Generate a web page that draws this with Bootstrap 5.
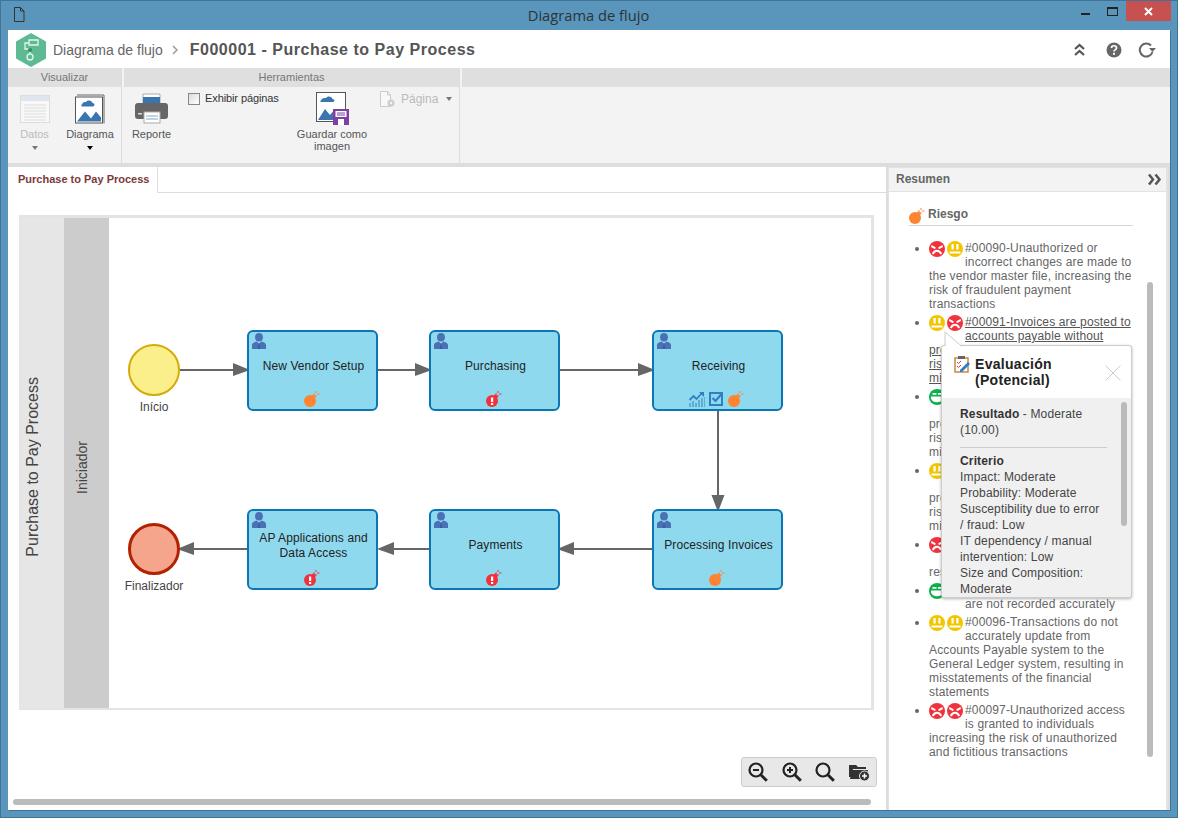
<!DOCTYPE html>
<html lang="es">
<head>
<meta charset="UTF-8">
<title>Diagrama de flujo</title>
<link href="https://cdn.jsdelivr.net/npm/bootstrap@5.3.3/dist/css/bootstrap.min.css" rel="stylesheet">
<style>
html, body { height: 818px; overflow: hidden; }
body { font-family: "Liberation Sans", Arial, sans-serif; font-size: 12px; line-height: 14px; color: #666; background: #5a96bc; }
.win { height: 818px; border: 1px solid #3f7397; padding: 0 7px 7px 7px; }
.titlebar { height: 29px; flex: none; color: #2b3a44; }
.tb-title { font-family: "Open Sans", sans-serif; font-size: 14.7px; line-height: 29px; margin-right: 1px; color: #2d3338; }
.tb-doc { position: absolute; left: 5px; top: 6px; }
.tb-btns { position: absolute; right: -1px; top: 0; }
.tb-close { width: 45px; height: 20px; background: #c75050; }
.tb-mini { width: 27px; height: 20px; }
.inner { flex: 1; min-height: 0; background: #fff; box-shadow: 1px 1px 0 #3f7397; }
.headbar { height: 38px; flex: none; padding: 2px 14px 0 8px; background: #fff; }
.crumb { font-size: 14px; color: #666; margin-left: 7px; }
.crumb-sep { margin: 0 12px 0 9px; }
.page-title { font-size: 16px; font-weight: 700; color: #555; letter-spacing: .52px; }
.head-tools { gap: 16px; }
.ribbon { height: 99px; flex: none; background: #f3f3f3; border-bottom: 4px solid #ddd; }
.rb-group { border-right: 1px solid #ddd; }
.rb-head { height: 19px; line-height: 19px; background: #dfdfdf; text-align: center; font-size: 11px; color: #777; }
.rb-1 { width: 114px; margin-right: 2px; }
.rb-2 { width: 336px; margin-right: 2px; }
.rb-body { height: 76px; padding-top: 6px; }
.rb-btn { text-align: center; font-size: 11px; line-height: 12px; color: #555; flex: none; }
.rb-btn svg { display: block; margin: 0 auto 4px; }
.rb-btn .rb-save { margin-top: -1px; margin-bottom: 3px; }
.is-off { color: #bbb; }
.rb-caret { width: 0; height: 0; border: 3px solid transparent; border-top: 4px solid #777; border-bottom: 0; display: block; margin: 6px auto 0; }
.rb-caret-dark { border-top-color: #000; }
.rb-check { width: 12px; height: 12px; border: 1px solid #888; background: linear-gradient(135deg,#ddd,#fff); display: block; margin-left: 9px; }
.rb-checktxt { font-size: 11px; color: #333; margin: -2px 0 0 5px; letter-spacing: -.1px; }
.pg-icon { margin: -2px 0 0 3px; }
.pg-txt { margin: -1px 0 0 5px; }
.pg-caret { margin: 4px 0 0 8px; }
.mainarea { flex: 1; min-height: 0; background: #ddd; }
.leftpane { width: 878px; flex: none; background: #fff; }
.rightpane { width: 280px; flex: none; margin-left: 2px; background: #fff; border: 2px solid #e2e2e2; border-width: 1px 2px 0 1px; }
.tabbar { height: 26px; flex: none; border-bottom: 1px solid #ddd; }
.tab-item { width: 150px; height: 26px; background: #fff; border-right: 1px solid #ddd; padding-left: 10px; font-size: 11px; line-height: 25px; font-weight: 700; color: #7a3a3a; margin-bottom: -1px; }
.dgm { position: absolute; left: 11px; top: 48px; width: 855px; height: 495px; border: 3px solid #e4e4e4; border-width: 3px 3px 2px 0; }
.pool-lbl { width: 45px; background: #e6e6e6; color: #444; font-size: 16px; padding: 8px 0 0 7px; }
.lane-lbl { width: 45px; background: #ccc; color: #444; font-size: 14px; padding: 8px 0 0 11px; }
.vtext { writing-mode: vertical-rl; transform: rotate(180deg); white-space: nowrap; }
.dgm-lines { position: absolute; left: -19px; top: -218px; }
.dnode { position: absolute; width: 131px; height: 81px; background: #8fd9ef; border: 2px solid #0b76b3; border-radius: 6px; color: #222; font-size: 12px; line-height: 15px; text-align: center; letter-spacing: .1px; }
.dnode-txt { height: 60px; padding: 9px 5px 0 7px; }
.dnode-user { position: absolute; left: 3px; top: 1px; }
.dnode-icons { position: absolute; left: 0; right: 2px; bottom: 2px; gap: 4px; }
.devt { position: absolute; width: 52px; height: 52px; border-radius: 50%; }
.devt-start { background: #fbef8c; border: 2px solid #d4ab0b; }
.devt-end { background: #f4a58c; border: 3px solid #b22200; }
.devt-lbl { position: absolute; width: 90px; text-align: center; color: #444; }
.zoombar { position: absolute; right: 9px; bottom: 23px; width: 136px; height: 30px; background: #e8e8e8; border: 1px solid #ccc; border-radius: 3px; padding: 0 6px; }
.hscroll { position: absolute; left: 5px; bottom: 5px; width: 858px; height: 6px; background: #bbb; border-radius: 3px; }
.res-head { height: 24px; flex: none; background: #f3f3f3; border-bottom: 1px solid #e2e2e2; font-weight: 700; line-height: 21px; padding: 0 4px 0 7px; }
.res-body { flex: 1; min-height: 0; padding: 17px 0 0 20px; }
.risk-head { width: 224px; height: 17px; border-bottom: 1px solid #d5d5d5; font-weight: 700; }
.risk-head svg { margin-top: -1px; }
.risk-head span { margin-left: 3px; margin-top: -2px; }
.risk-list { width: 224px; margin: 15px 0 0 0; padding: 0 0 0 20px; letter-spacing: .15px; }
.risk-list li { margin-bottom: 4px; }
.risk-list li::marker { color: #666; }
.faces { float: left; width: 36px; height: 26px; display: block; }
.faces svg { float: left; margin: 0 2px 0 0; }
.risk-link { color: #555; text-decoration: underline; }
.vscroll { position: absolute; left: 258px; top: 114px; width: 6px; height: 475px; background: #bbb; border-radius: 3px; }
.evalbox { position: absolute; left: 52px; top: 177px; width: 191px; height: 253px; background: #f0f0f0; border: 1px solid #ccc; border-radius: 3px; box-shadow: 0 1px 3px rgba(0,0,0,.3); color: #444; letter-spacing: .15px; }
.evalbox-tip { position: absolute; left: 2px; top: -14px; }
.eval-head { height: 52px; background: #fff; border-radius: 3px 3px 0 0; padding: 10px 11px 0 12px; }
.eval-title { font-size: 14px; line-height: 16px; font-weight: 700; color: #222; letter-spacing: .3px; margin-left: 5px; width: 120px; }
.eval-x { position: absolute; right: 10px; top: 19px; }
.eval-body { padding: 8px 24px 0 18px; line-height: 16px; }
.eval-body hr { margin: 9px 0 5px 0; border-top: 1px solid #ccc; opacity: 1; }
.eval-strong { font-weight: 700; color: #333; }
.eval-scroll { position: absolute; right: 4px; top: 56px; width: 6px; height: 124px; background: #bbb; border-radius: 3px; }
</style>
</head>
<body>
<svg width="0" height="0" class="position-absolute">
  <defs>
    <symbol id="bomb" viewBox="0 0 16 16"><circle cx="6" cy="10" r="6" fill="#ff8431"/><path d="M7.500 5l2-2 2.800 2.800-2 2z" fill="#ff8431"/><path d="M12 0v2M12 4v1.500M9.500 3H11M13 3h2.500" stroke="#ff8431" fill="none"/></symbol>
    <symbol id="bombred" viewBox="0 0 16 16"><circle cx="6" cy="10" r="6" fill="#f0323c"/><path d="M7.500 5l2-2 2.800 2.800-2 2z" fill="#f0323c"/><path d="M12 0v2M12 4v1.500M9.500 3H11M13 3h2.500" stroke="#f0323c" fill="none"/><path d="M5 6.500h2.200v4.500H5zM5 12h2.200v2H5z" fill="#fff"/></symbol>
    <symbol id="user" viewBox="0 0 14 16"><ellipse cx="7" cy="4.300" rx="3.900" ry="4.300" fill="#4a70b5"/><path d="M0 16v-4c0-1.600 1.500-2.700 4.500-3.500L7 10.500l2.500-2c3 .8 4.500 1.900 4.500 3.500v4z" fill="#4a70b5"/><path d="M6.300 16l.4-4.500h.6l.4 4.500z" fill="#2f4f8f"/></symbol>
    <symbol id="fred" viewBox="0 0 16 16"><circle cx="8" cy="8" r="8" fill="#f0323c"/><path d="M2.500 4l4.200 2.200-.6 2L2 6zM13.500 4L9.300 6.200l.6 2L14 6z" fill="#fff"/><path d="M3.800 13c1-2.300 2.600-3.200 4.200-3.200s3.200.9 4.200 3.200" stroke="#fff" stroke-width="1.900" fill="none"/></symbol>
    <symbol id="fyel" viewBox="0 0 16 16"><circle cx="8" cy="8" r="8" fill="#f2c500"/><path d="M4.500 3h2.200v5.500H4.500zM9.300 3h2.200v5.500H9.300zM2.500 10.500h11v1.900h-11z" fill="#fff"/></symbol>
    <symbol id="fgrn" viewBox="0 0 16 16"><circle cx="8" cy="8" r="8" fill="#0cb14b"/><path d="M3.500 4h4v1.800h-4zM9 4h4v1.800H9zM2 7.500h12v2c-1 2.700-3.300 3.800-6 3.800s-5-1.100-6-3.800z" fill="#fff"/></symbol>
    <symbol id="picture" viewBox="0 0 30 30"><path d="M2 1.500h27V30" fill="none" stroke="#666"/><rect x=".5" y="3.500" width="27" height="26" fill="#fff" stroke="#555"/><path d="M7 13h11c2 0 2-3.500-.5-3.500C17 6.500 12 6 11 8.500 8.500 8 7 9.500 7.500 10.500 6 11 6 13 7 13z" fill="#3a75b0"/><path d="M2 28l8-10 6 7 5-7 5 6v4z" fill="#3a75b0"/></symbol>
    <symbol id="mag" viewBox="0 0 20 20"><circle cx="8" cy="8" r="6.500" fill="none" stroke="#222" stroke-width="2.200"/><path d="M12.800 12.800l6 6" stroke="#222" stroke-width="3"/></symbol>
  </defs>
</svg>

<div class="win d-flex flex-column position-relative">
  <div class="titlebar d-flex justify-content-center position-relative">
    <svg class="tb-doc" width="12" height="15" viewBox="0 0 12 15"><path d="M1.500 .5h6l3.500 3.500v10.500H1.500z M7.500 .5V4H11" fill="none" stroke="#333"/></svg>
    <span class="tb-title">Diagrama de flujo</span>
    <div class="tb-btns d-flex">
      <div class="tb-mini d-flex align-items-center justify-content-center"><svg width="9" height="14" viewBox="0 0 9 14"><rect y="9" width="9" height="2" fill="#222"/></svg></div>
      <div class="tb-mini d-flex align-items-center justify-content-center"><svg width="11" height="9" viewBox="0 0 11 9"><rect x=".5" y="1" width="10" height="7.500" fill="none" stroke="#222"/><rect width="11" height="2" fill="#222"/></svg></div>
      <div class="tb-close d-flex align-items-center justify-content-center"><svg width="9" height="9" viewBox="0 0 9 9"><path d="M1 1l7 7M8 1L1 8" stroke="#fff" stroke-width="2"/></svg></div>
    </div>
  </div>

  <div class="inner d-flex flex-column">
    <div class="headbar d-flex align-items-center">
      <svg width="30" height="34" viewBox="0 0 30 34"><path d="M15 0l15 8.500v17L15 34 0 25.500v-17z" fill="#5dba92"/><path d="M13 7h9v5h-9zM11 24a3 3 0 1 0 6 0 3 3 0 1 0-6 0M14 18v3M13 10H9v6h5" fill="none" stroke="#e6f5ee" stroke-width="1.300"/><circle cx="14" cy="17" r="2" fill="#2f8f63"/></svg>
      <span class="crumb">Diagrama de flujo</span>
      <svg class="crumb-sep" width="6" height="10" viewBox="0 0 6 10"><path d="M1 1l4 4-4 4" fill="none" stroke="#999" stroke-width="1.500"/></svg>
      <span class="page-title">F000001 - Purchase to Pay Process</span>
      <div class="ms-auto d-flex align-items-center head-tools">
        <svg width="13" height="14" viewBox="0 0 13 14" class="me-1"><path d="M2 6l4.500-4L11 6M2 12l4.500-4 4.500 4" fill="none" stroke="#555" stroke-width="2.200"/></svg>
        <svg width="16" height="16" viewBox="0 0 16 16"><circle cx="8" cy="8" r="7.500" fill="#666"/><path d="M5.500 6c0-3 5-3 5 0 0 2-2.500 1.800-2.500 3.500" fill="none" stroke="#fff" stroke-width="1.700"/><rect x="7" y="10.800" width="2" height="2" fill="#fff"/></svg>
        <svg width="18" height="16" viewBox="0 0 18 16"><path d="M14.500 10A6.500 6.500 0 1 1 13 3.500" fill="none" stroke="#666" stroke-width="2"/><path d="M11 6h7l-3.500 4z" fill="#666"/></svg>
      </div>
    </div>

    <div class="ribbon d-flex">
      <div class="rb-group rb-1">
        <div class="rb-head">Visualizar</div>
        <div class="rb-body d-flex">
          <div class="rb-btn is-off" style="width:53px">
            <svg width="30" height="31" viewBox="0 0 30 31"><rect x=".5" y="2.500" width="29" height="27" fill="#f8f8f8" stroke="#ddd"/><rect x="1" y="3" width="28" height="5" fill="#dfe6ee"/><path d="M4 12h22M4 15h22M4 18h22M4 21h22M4 24h22M4 27h22" stroke="#ddd"/></svg>
            Datos<span class="rb-caret"></span>
          </div>
          <div class="rb-btn" style="width:58px">
            <svg width="30" height="31"><use href="#picture"/></svg>
            Diagrama<span class="rb-caret rb-caret-dark"></span>
          </div>
        </div>
      </div>
      <div class="rb-group rb-2">
        <div class="rb-head">Herramientas</div>
        <div class="rb-body d-flex">
          <div class="rb-btn" style="width:55px">
            <svg width="33" height="31" viewBox="0 0 33 31"><path d="M8 1h17v9H8z" fill="#fff" stroke="#aaa"/><rect x="8" y="4" width="17" height="6" fill="#3a75b0"/><path d="M3 10h27a3 3 0 0 1 3 3v10a3 3 0 0 1-3 3H3a3 3 0 0 1-3-3V13a3 3 0 0 1 3-3z" fill="#666"/><rect x="9" y="19" width="16" height="11" fill="#fff" stroke="#aaa"/><path d="M11 23h12M11 26h12" stroke="#7fa9d0"/><rect x="3" y="20" width="4" height="1.500" fill="#ddd"/></svg>
            Reporte
          </div>
          <div class="d-flex align-items-start" style="width:108px">
            <span class="rb-check"></span><span class="rb-checktxt">Exhibir páginas</span>
          </div>
          <div class="rb-btn" style="width:90px">
            <svg class="rb-save" width="33" height="33" viewBox="0 0 33 33"><rect x=".5" y=".5" width="29" height="29" fill="#fff" stroke="#555"/><path d="M5 10h12c2 0 2-3-.5-3C16 4 11 3.500 10 6 7 5.500 5 7 5.500 8 4 8.500 4 10 5 10z" fill="#3a75b0"/><path d="M2 28l7-11 5 6 5-6 5 6v5z" fill="#3a75b0"/><rect x="17" y="17" width="16" height="16" fill="#7f3fa5"/><path d="M19.500 19h11v6h-11z" fill="#fff"/><path d="M21 21h8M21 23h8" stroke="#7f3fa5"/><rect x="22" y="27" width="6" height="6" fill="#fff"/></svg>
            Guardar como<br>imagen
          </div>
          <div class="d-flex is-off align-items-start">
            <svg width="16" height="17" viewBox="0 0 16 17" class="pg-icon"><path d="M.5 .5h7l3 3v12H.5z M7.500 .5V4h3" fill="#f8f8f8" stroke="#ccc"/><circle cx="11" cy="12" r="3.500" fill="#ccc"/><circle cx="11" cy="12" r="1.300" fill="#f3f3f3"/></svg>
            <span class="pg-txt">Página</span>
            <span class="rb-caret pg-caret"></span>
          </div>
        </div>
      </div>
      <div class="flex-grow-1">
        <div class="rb-head"></div>
      </div>
    </div>

    <div class="mainarea d-flex">
      <div class="leftpane position-relative d-flex flex-column">
        <div class="tabbar d-flex"><div class="tab-item">Purchase to Pay Process</div></div>
        <div class="dgm d-flex">
          <div class="pool-lbl d-flex align-items-center"><span class="vtext">Purchase to Pay Process</span></div>
          <div class="lane-lbl d-flex align-items-center"><span class="vtext">Iniciador</span></div>
          <svg class="dgm-lines" width="900" height="720" viewBox="0 0 900 720">
            <g stroke="#666" stroke-width="2" fill="none"><path d="M179 370h60M378 370h45M560 370h85M718 410v90M653 549h-88M430 549h-45M248 549h-62"/></g>
            <g fill="#666"><path d="M250 370l-17-7v13zM432 370l-17-7v13zM655 370l-17-7v13zM718 512l-6.500-17h13zM557 549l17-7v13zM377 549l17-7v13zM177 549l17-7v13z"/></g>
          </svg>

          <div class="devt devt-start" style="left:109px;top:126px"></div>
          <div class="devt-lbl" style="left:90px;top:182px">Início</div>
          <div class="devt devt-end" style="left:109px;top:305px"></div>
          <div class="devt-lbl" style="left:90px;top:361px">Finalizador</div>

          <div class="dnode" style="left:228px;top:112px"><svg class="dnode-user" width="14" height="16"><use href="#user"/></svg><div class="dnode-txt d-flex align-items-center justify-content-center">New Vendor Setup</div><div class="dnode-icons d-flex justify-content-center"><svg width="16" height="16"><use href="#bomb"/></svg></div></div>
          <div class="dnode" style="left:410px;top:112px"><svg class="dnode-user" width="14" height="16"><use href="#user"/></svg><div class="dnode-txt d-flex align-items-center justify-content-center">Purchasing</div><div class="dnode-icons d-flex justify-content-center"><svg width="16" height="16"><use href="#bombred"/></svg></div></div>
          <div class="dnode" style="left:633px;top:112px"><svg class="dnode-user" width="14" height="16"><use href="#user"/></svg><div class="dnode-txt d-flex align-items-center justify-content-center">Receiving</div><div class="dnode-icons d-flex justify-content-center">
            <svg width="16" height="16" viewBox="0 0 16 16"><path d="M1 16v-4M4 16v-6M7 16v-4M10 16V9M13 16V7M16 16V6" stroke="#2f7fc4"/><path d="M.5 9l4-4 3 3 5.500-6" fill="none" stroke="#2f7fc4" stroke-width="1.800"/><path d="M10 1h5v5z" fill="#2f7fc4"/></svg>
            <svg width="15" height="15" viewBox="0 0 15 15"><rect x="1" y="2" width="12" height="12" fill="none" stroke="#2f7fc4" stroke-width="2"/><path d="M3.500 7l3 3 6-7" fill="none" stroke="#2f7fc4" stroke-width="2.200"/></svg>
            <svg width="16" height="16"><use href="#bomb"/></svg></div></div>

          <div class="dnode" style="left:228px;top:291px"><svg class="dnode-user" width="14" height="16"><use href="#user"/></svg><div class="dnode-txt d-flex align-items-center justify-content-center">AP Applications and<br>Data Access</div><div class="dnode-icons d-flex justify-content-center"><svg width="16" height="16"><use href="#bombred"/></svg></div></div>
          <div class="dnode" style="left:410px;top:291px"><svg class="dnode-user" width="14" height="16"><use href="#user"/></svg><div class="dnode-txt d-flex align-items-center justify-content-center">Payments</div><div class="dnode-icons d-flex justify-content-center"><svg width="16" height="16"><use href="#bombred"/></svg></div></div>
          <div class="dnode" style="left:633px;top:291px"><svg class="dnode-user" width="14" height="16"><use href="#user"/></svg><div class="dnode-txt d-flex align-items-center justify-content-center">Processing Invoices</div><div class="dnode-icons d-flex justify-content-center"><svg width="16" height="16"><use href="#bomb"/></svg></div></div>
        </div>
        <div class="zoombar d-flex align-items-center justify-content-between">
          <svg width="20" height="20" viewBox="0 0 20 20"><use href="#mag"/><path d="M5 8h6" stroke="#222" stroke-width="2"/></svg>
          <svg width="20" height="20" viewBox="0 0 20 20"><use href="#mag"/><path d="M5 8h6M8 5v6" stroke="#222" stroke-width="2"/></svg>
          <svg width="20" height="20" viewBox="0 0 20 20"><use href="#mag"/></svg>
          <svg width="21" height="18" viewBox="0 0 21 18"><path d="M0 2h7l2 2h8v2H4L2 14H0z M3 7h16l-2 9H1z" fill="#333"/><circle cx="15.500" cy="13" r="5" fill="#333" stroke="#e8e8e8"/><path d="M13 13h5M15.500 10.500v5" stroke="#fff" stroke-width="1.500"/></svg>
        </div>
        <div class="hscroll"></div>
      </div>

      <div class="rightpane position-relative d-flex flex-column">
        <div class="res-head d-flex justify-content-between align-items-center">
          <span>Resumen</span>
          <svg width="14" height="11" viewBox="0 0 14 11"><path d="M1 .5l4 5-4 5M7.500 .5l4 5-4 5" fill="none" stroke="#555" stroke-width="2.500"/></svg>
        </div>
        <div class="res-body">
          <div class="risk-head d-flex"><svg width="16" height="16"><use href="#bomb"/></svg><span>Riesgo</span></div>
          <ul class="risk-list">
            <li><span class="faces"><svg width="16" height="16"><use href="#fred"/></svg><svg width="16" height="16"><use href="#fyel"/></svg></span>#00090-Unauthorized or incorrect changes are made to the vendor master file, increasing the risk of fraudulent payment transactions</li>
            <li><span class="faces"><svg width="16" height="16"><use href="#fyel"/></svg><svg width="16" height="16"><use href="#fred"/></svg></span><span class="risk-link">#00091-Invoices are posted to accounts payable without proper authorization, increasing the risk of payment errors and financial misstatements</span></li>
            <li><span class="faces"><svg width="16" height="16"><use href="#fgrn"/></svg></span>#00092-Invoices are paid<br>to the same vendor twice<br>proper authorization, increasing the<br>risk of payment errors and financial<br>misstatements</li>
            <li><span class="faces"><svg width="16" height="16"><use href="#fyel"/></svg></span>#00093-Payments are issued<br>to inactive vendors without<br>proper authorization, increasing the<br>risk of payment errors and financial<br>misstatements</li>
            <li><span class="faces"><svg width="16" height="16"><use href="#fred"/></svg></span>#00094-Goods received are<br>not matched to purchase<br>resulting in misstatements</li>
            <li><span class="faces"><svg width="16" height="16"><use href="#fgrn"/></svg></span>#00095-Payment amounts<br>are not recorded accurately</li>
            <li><span class="faces"><svg width="16" height="16"><use href="#fyel"/></svg><svg width="16" height="16"><use href="#fyel"/></svg></span>#00096-Transactions do not<br>accurately update from Accounts Payable system to the General Ledger system, resulting in misstatements of the financial statements</li>
            <li><span class="faces"><svg width="16" height="16"><use href="#fred"/></svg><svg width="16" height="16"><use href="#fred"/></svg></span>#00097-Unauthorized access<br>is granted to individuals<br>increasing the risk of unauthorized and fictitious transactions</li>
          </ul>
        </div>
        <div class="vscroll"></div>
        <div class="evalbox">
          <svg class="evalbox-tip" width="18" height="15" viewBox="0 0 18 15"><path d="M1 0l17 14.500H1z" fill="#fff"/><path d="M1 14V0l17 14.500" fill="none" stroke="#ccc"/></svg>
          <div class="eval-head d-flex">
            <svg width="16" height="17" viewBox="0 0 16 17"><rect x="1" y="2" width="13" height="14" fill="#fff" stroke="#c98a3c" stroke-width="1.500"/><rect x="4" y="0" width="7" height="3" fill="#666"/><path d="M3 6l1.500 1.500L7 5M3 10l1.500 1.500L7 9" fill="none" stroke="#e0323c"/><path d="M6 14l8-8 2 2-8 8H6z" fill="#2f7fc4"/></svg>
            <div class="eval-title">Evaluación (Potencial)</div>
            <svg class="eval-x" width="16" height="16" viewBox="0 0 16 16"><path d="M.5 .5l15 15M15.500 .5l-15 15" stroke="#ccc"/></svg>
          </div>
          <div class="eval-body">
            <div><span class="eval-strong">Resultado</span> - Moderate (10.00)</div>
            <hr>
            <div class="eval-strong">Criterio</div>
            <div>Impact: Moderate</div>
            <div>Probability: Moderate</div>
            <div>Susceptibility due to error<br>/ fraud: Low</div>
            <div>IT dependency / manual intervention: Low</div>
            <div>Size and Composition: Moderate</div>
          </div>
          <div class="eval-scroll"></div>
        </div>
      </div>
    </div>
  </div>
</div>
<script src="https://cdn.jsdelivr.net/npm/bootstrap@5.3.3/dist/js/bootstrap.bundle.min.js"></script>
</body>
</html>
